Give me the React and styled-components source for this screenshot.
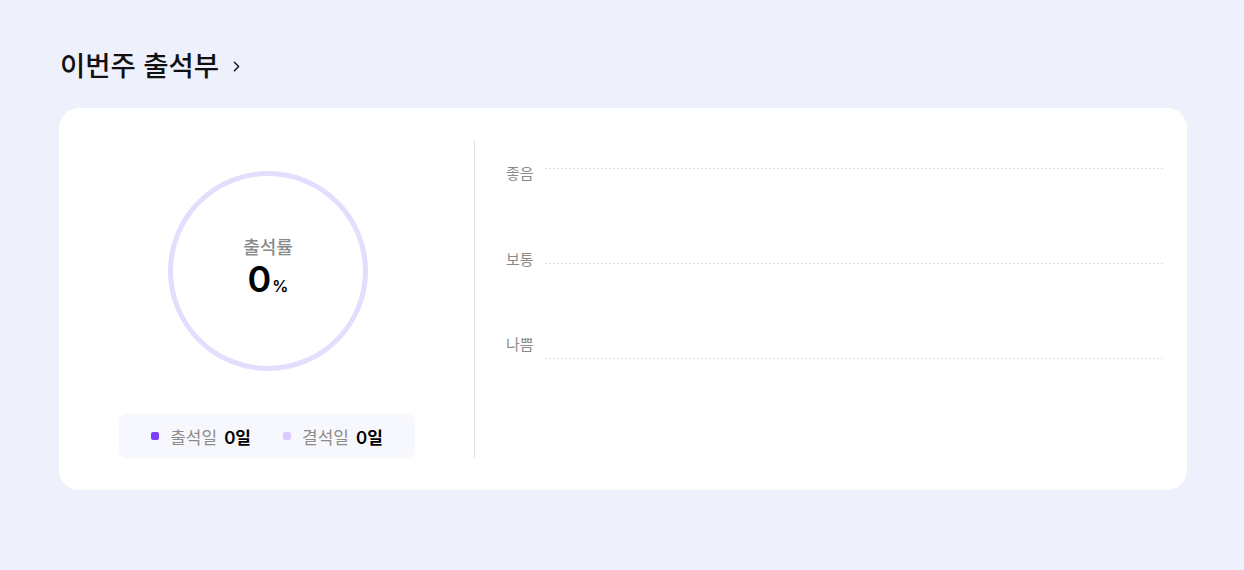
import React from 'react';
import styled, { createGlobalStyle } from 'styled-components';
import { ChevronRight } from 'lucide-react';

const GlobalStyle = createGlobalStyle`
  body {
    margin: 0;
    background: #eef1fc;
    font-family: Inter, "Noto Sans CJK KR", sans-serif;
  }
`;

const Page = styled.div`
  padding: 46px 57px 80px 59px;
`;

const Title = styled.h2`
  display: flex;
  align-items: center;
  gap: 9px;
  margin: 0 0 22px 1px;
  font-size: 27.5px;
  font-weight: 500;
  line-height: 40px;
  color: #111;
`;

const Card = styled.section`
  display: flex;
  background: #fff;
  border-radius: 20px;
  padding: 32px 0;
  width: 1128px;
  box-sizing: border-box;
`;

const Summary = styled.div`
  width: 416px;
  flex: none;
  display: flex;
  flex-direction: column;
  align-items: center;
  padding-top: 31px;
  gap: 43px;
  border-right: 1px solid #e2e2e2;
  box-sizing: border-box;
`;

const Ring = styled.div`
  width: 200px;
  height: 200px;
  box-sizing: border-box;
  border: 5px solid #e5ddfe;
  border-radius: 50%;
  display: flex;
  flex-direction: column;
  align-items: center;
  justify-content: center;
  margin-left: 3px;
`;

const RingLabel = styled.div`
  font-size: 18px;
  font-weight: 500;
  color: #8a8a8a;
  line-height: 24px;
`;

const RingValue = styled.div`
  display: flex;
  align-items: baseline;
  font-family: Inter, sans-serif;
  color: #000;
  line-height: 40px;
  margin-top: -1px;
`;

const Big = styled.span`
  font-size: 36px;
  font-weight: 600;
`;

const Unit = styled.span`
  font-size: 16px;
  font-weight: 600;
  margin-left: 1px;
`;

const Legend = styled.div`
  width: 296px;
  height: 44px;
  margin-left: 1px;
  background: #f7f8fd;
  border-radius: 8px;
  display: flex;
  align-items: center;
  justify-content: center;
  gap: 32px;
`;

const LegendItem = styled.div`
  display: flex;
  align-items: center;
  gap: 11px;
  font-size: 17px;
  color: #8c8c8c;
`;

const Dot = styled.span`
  width: 8px;
  height: 8px;
  border-radius: 2px;
  background: ${p => p.color};
`;

const Count = styled.b`
  color: #000;
  font-weight: 600;
  margin-left: -4px;
`;

const Chart = styled.div`
  flex: 1;
  display: flex;
  flex-direction: column;
  gap: 75px;
  padding: 18px 24px 0 31px;
`;

const Row = styled.div`
  display: flex;
  align-items: center;
  height: 20px;
`;

const AxisLabel = styled.span`
  width: 39px;
  flex: none;
  font-size: 15px;
  color: #8a8a8a;
  transform: translateY(${p => p.shift}px);
`;

const GridLine = styled.div`
  flex: 1;
  height: 1px;
  background: repeating-linear-gradient(to right, #e0e0e0 0 2px, transparent 2px 4px);
`;

const levels = [
  { label: '좋음', shift: 4 },
  { label: '보통', shift: -5 },
  { label: '나쁨', shift: -15 },
];

export default function App() {
  return (
    <Page>
      <GlobalStyle />
      <Title>
        이번주 출석부
        <ChevronRight size={17} strokeWidth={2} />
      </Title>
      <Card>
        <Summary>
          <Ring>
            <RingLabel>출석률</RingLabel>
            <RingValue>
              <Big>0</Big>
              <Unit>%</Unit>
            </RingValue>
          </Ring>
          <Legend>
            <LegendItem>
              <Dot color="#7b42f6" />
              출석일 <Count>0일</Count>
            </LegendItem>
            <LegendItem>
              <Dot color="#d9cbfd" />
              결석일 <Count>0일</Count>
            </LegendItem>
          </Legend>
        </Summary>
        <Chart>
          {levels.map(l => (
            <Row key={l.label}>
              <AxisLabel shift={l.shift}>{l.label}</AxisLabel>
              <GridLine />
            </Row>
          ))}
        </Chart>
      </Card>
    </Page>
  );
}
